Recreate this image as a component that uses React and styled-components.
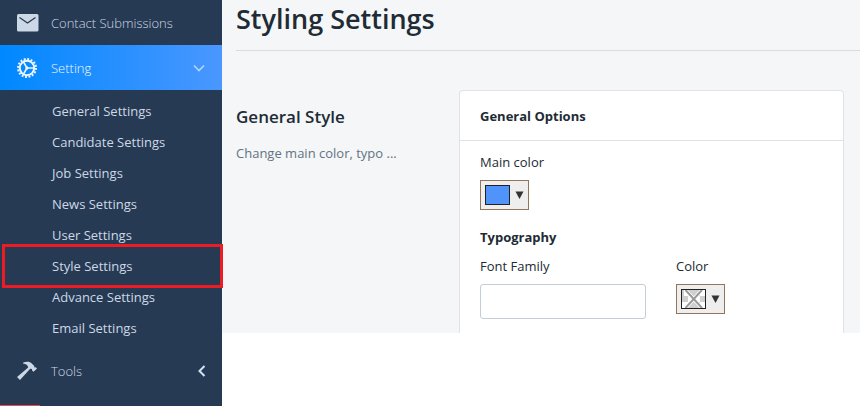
import React from 'react';
import styled, { createGlobalStyle } from 'styled-components';

const GlobalStyle = createGlobalStyle`
  *, *::before, *::after { box-sizing: border-box; }
  body {
    margin: 0;
    background: #fff;
    color: #212b35;
    font-family: "Open Sans", "Noto Sans", sans-serif;
    font-size: 13px;
    line-height: 20px;
    overflow: hidden;
  }
  h1, h2, h3, h4, p, ul { margin: 0; padding: 0; }
`;

const Page = styled.div`
  display: flex;
  align-items: flex-start;
  min-height: 100vh;
`;

const Sidebar = styled.nav`
  display: flex;
  flex-direction: column;
  flex: 0 0 222px;
  min-height: 100vh;
  background: #273a53;
`;

const MenuButton = styled.button`
  display: flex;
  align-items: center;
  width: 100%;
  height: 45px;
  padding: 0 14px 0 16px;
  border: 0;
  background: ${(p) => (p.$active ? 'linear-gradient(to right, #0088ff, #4a97ff)' : 'transparent')};
  color: ${(p) => (p.$active ? '#eef6ff' : '#ccd8e6')};
  font: inherit;
  font-weight: 300;
  text-align: left;
  cursor: pointer;
`;

const MenuIcon = styled.svg`
  flex: none;
  width: 24px;
  height: 24px;
  margin-right: 11px;
`;

const MenuText = styled.span`
  flex: 1;
`;

const Chevron = styled.svg`
  flex: none;
  width: 16px;
  height: 16px;
  fill: none;
  stroke: ${(p) => (p.$down ? '#b5d6fb' : '#d5e4f4')};
  stroke-width: ${(p) => (p.$down ? 1.6 : 2)};
  margin-right: ${(p) => (p.$down ? '1px' : '-2px')};
`;

const SubMenu = styled.ul`
  padding: 6px 0 4px;
  list-style: none;
`;

const SubItem = styled.li`
  position: relative;
  ${(p) =>
    p.$marked &&
    `&::after {
      content: "";
      position: absolute;
      inset: -7px -1px -6px 2px;
      border: 3px solid #ed1c24;
      pointer-events: none;
    }`}
`;

const SubLink = styled.a`
  display: block;
  padding: 0 16px 0 52px;
  line-height: 31px;
  color: #ccd8e6;
  text-decoration: none;
`;

const BottomMark = styled.div`
  width: 40px;
  height: 1px;
  margin-top: auto;
  background: #e34b58;
`;

const Main = styled.main`
  flex: 1;
  min-width: 0;
  padding-left: 14px;
  background: #f4f6f8;
`;

const Title = styled.h1`
  padding-bottom: 12px;
  border-bottom: 1px solid #d9dcdf;
  font-size: 27px;
  font-weight: 500;
  font-weight: 600;
  line-height: 38px;
`;

const Section = styled.section`
  display: grid;
  grid-template-columns: 223px minmax(0, 1fr);
  padding: 39px 16px 0 0;
`;

const Intro = styled.div`
  padding-top: 15px;
`;

const IntroTitle = styled.h2`
  font-size: 17px;
  font-weight: 600;
  line-height: 24px;
  margin-bottom: 14px;
`;

const IntroText = styled.p`
  color: #637381;
`;

const Card = styled.div`
  border: 1px solid #dfe3e8;
  border-bottom: 0;
  border-radius: 4px 4px 0 0;
  background: #fff;
`;

const CardHeader = styled.h3`
  padding: 15px 20px 14px;
  border-bottom: 1px solid #dfe3e8;
  font-size: 13px;
  font-weight: 700;
`;

const CardBody = styled.div`
  padding: 11px 20px 14px;
`;

const Label = styled.label`
  display: block;
  margin-bottom: 8px;
`;

const GroupTitle = styled.h4`
  margin: 17px 0 9px;
  font-size: 13px;
  font-weight: 700;
`;

const FieldRow = styled.div`
  display: grid;
  grid-template-columns: 166fr 147fr;
  column-gap: 30px;
`;

const TextInput = styled.input`
  display: block;
  width: 100%;
  height: 35px;
  padding: 0 10px;
  border: 1px solid #c4cdd5;
  border-radius: 3px;
  background: #fff;
  font: inherit;
`;

const PickerButton = styled.button`
  display: flex;
  align-items: center;
  gap: 5px;
  height: 30px;
  padding: 4px;
  border: 1px solid #91765d;
  background: #eee;
  cursor: pointer;
`;

const Swatch = styled.svg`
  width: 25px;
  height: 20px;
  border: 1px solid #222;
  background: ${(p) => p.$color};
`;

const Arrow = styled.svg`
  width: 9px;
  height: 8px;
  fill: #333;
`;

function MailIcon() {
  return (
    <MenuIcon viewBox="0 0 24 24" aria-hidden="true">
      <rect x="1" y="3" width="21.5" height="17.5" rx="1.5" fill="#ccd8e6" />
      <path d="M3.5 6.5 L11.5 12 L19.5 6.5" fill="none" stroke="#273a53" strokeWidth="1.3" />
    </MenuIcon>
  );
}

function GearIcon() {
  return (
    <MenuIcon viewBox="0 0 24 24" aria-hidden="true" fill="none" stroke="#eef6ff">
      <circle cx="11" cy="12" r="9" strokeWidth="2" strokeDasharray="1.9 1.634" />
      <circle cx="11" cy="12" r="7.2" strokeWidth="2" />
      <path d="M11 12 H18 M11 12 L7.5 6 M11 12 L7.5 18" strokeWidth="1.5" />
      <circle cx="11" cy="12" r="1.2" fill="#eef6ff" />
    </MenuIcon>
  );
}

function HammerIcon() {
  return (
    <MenuIcon viewBox="0 0 24 24" aria-hidden="true" fill="#ccd8e6">
      <path d="M7 3.8 C9.5 2.4 13.2 2.3 15.2 4 L18.3 7 L18.3 8.5 L19.8 8.2 L21 9.5 L17.6 12.8 L16 11.4 L16 10 L14.2 9.8 L4 21 L1 18.1 L12.2 8.4 C12 6.3 10 4.7 7 4.5 Z" />
    </MenuIcon>
  );
}

function ColorPicker({ id, color }) {
  return (
    <PickerButton id={id} type="button">
      <Swatch viewBox="0 0 23 18" $color={color || '#fff'} aria-hidden="true">
        {!color && (
          <>
            <path
              fill="#cfcfcf"
              d="M0 0h2v6H0z M6 0h6v6H6z M12 0h6v6h-6z M0 6h6v6H0z M18 6h5v6h-5z M6 12h6v6H6z M12 12h6v6h-6z"
            />
            <path d="M3.5 0 L20 18 M20 0 L3.5 18" stroke="#fff" strokeWidth="3.6" />
            <path d="M3.5 0 L20 18 M20 0 L3.5 18" stroke="#999" strokeWidth="2" />
          </>
        )}
      </Swatch>
      <Arrow viewBox="0 0 9 8" aria-hidden="true">
        <path d="M0.5 0.5h8L4.5 8z" />
      </Arrow>
    </PickerButton>
  );
}

const settings = ['General', 'Candidate', 'Job', 'News', 'User', 'Style', 'Advance', 'Email'];

export default function App() {
  return (
    <>
      <GlobalStyle />
      <Page>
        <Sidebar>
          <MenuButton type="button">
            <MailIcon />
            <MenuText>Contact Submissions</MenuText>
          </MenuButton>
          <MenuButton type="button" $active aria-expanded="true">
            <GearIcon />
            <MenuText>Setting</MenuText>
            <Chevron $down viewBox="0 0 16 16" aria-hidden="true">
              <path d="M3 5.5 L8 10.5 L13 5.5" />
            </Chevron>
          </MenuButton>
          <SubMenu>
            {settings.map((name) => (
              <SubItem key={name} $marked={name === 'Style'}>
                <SubLink href="#">{`${name} Settings`}</SubLink>
              </SubItem>
            ))}
          </SubMenu>
          <MenuButton type="button" aria-expanded="false">
            <HammerIcon />
            <MenuText>Tools</MenuText>
            <Chevron viewBox="0 0 16 16" aria-hidden="true">
              <path d="M10.5 3 L5.5 8 L10.5 13" />
            </Chevron>
          </MenuButton>
          <BottomMark />
        </Sidebar>
        <Main>
          <Title>Styling Settings</Title>
          <Section>
            <Intro>
              <IntroTitle>General Style</IntroTitle>
              <IntroText>Change main color, typo ...</IntroText>
            </Intro>
            <Card>
              <CardHeader>General Options</CardHeader>
              <CardBody>
                <Label htmlFor="main-color">Main color</Label>
                <ColorPicker id="main-color" color="#4f93fb" />
                <GroupTitle>Typography</GroupTitle>
                <FieldRow>
                  <div>
                    <Label htmlFor="font-family">Font Family</Label>
                    <TextInput id="font-family" type="text" />
                  </div>
                  <div>
                    <Label htmlFor="font-color">Color</Label>
                    <ColorPicker id="font-color" />
                  </div>
                </FieldRow>
              </CardBody>
            </Card>
          </Section>
        </Main>
      </Page>
    </>
  );
}
